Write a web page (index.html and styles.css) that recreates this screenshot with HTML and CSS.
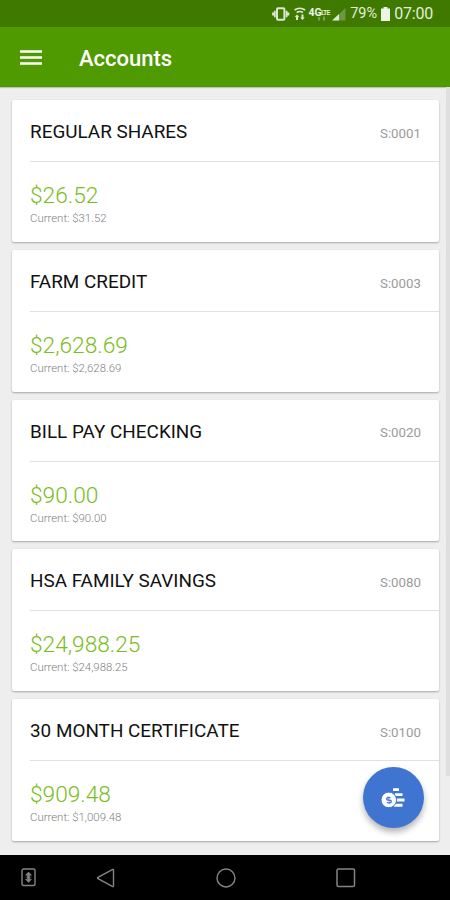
FILE: index.html
```html
<!DOCTYPE html>
<html lang="en">
<head>
    <meta charset="UTF-8">
    <meta name="viewport" content="width=device-width, initial-scale=1.0">
    <title>Accounts</title>
    <link rel="stylesheet" href="styles.css">
</head>
<body>

    <!-- Status bar -->
    <div class="status-bar">
        <svg class="status-icons" width="77" height="18" viewBox="0 0 77 18">
            <!-- Vibrate -->
            <rect x="5" y="3.2" width="7.4" height="11.6" rx="1" fill="none" stroke="#dce8cf" stroke-width="2"/>
            <path d="M2.8 5.8v6.4M14.6 5.8v6.4M1 7.5v3M16.4 7.5v3" stroke="#dce8cf" stroke-width="1.8"/>
            <!-- Wifi with arrows -->
            <path d="M22.5 5q5.3-3.5 10.6 0M24.7 7.5q3.1-2 6.200 0" fill="none" stroke="#dce8cf" stroke-width="1.7"/>
            <path d="M25 9.5l2.3 2.5h-1.3v3h-2v-3h-1.3zM30.5 15l-2.3-2.500h1.3v-3h2v3h1.300z" fill="#dce8cf"/>
            <text class="lte" x="36.5" y="11">4G</text>
            <text class="lte-small" x="49" y="10">LTE</text>
            <path d="M47 12v3.500M52 11.500v4" stroke="#8bae68" stroke-width="1.500"/>
            <!-- Signal -->
            <path d="M73.500 3v12.500h-13z" fill="#6d9843"/>
            <path d="M60 15.500l7-6.500v6.500z" fill="#dce8cf"/>
        </svg>
        <span class="battery-level">79%</span>
        <svg class="battery" width="9" height="14" viewBox="0 0 9 14">
            <path d="M2.5 0h4v1.5H9V14H0V1.500h2.500z" fill="#edf3e6"/>
        </svg>
        <span class="clock">07:00</span>
    </div>

    <header class="app-bar">
        <svg width="22" height="16" viewBox="0 0 22 16">
            <path d="M0 1.5h22M0 7.500h22M0 13.500h22" stroke="#fff" stroke-width="2.3"/>
        </svg>
        <h1>Accounts</h1>
    </header>

    <main class="accounts">
        <section class="card">
            <div class="card-header">
                <h2>REGULAR SHARES</h2>
                <span class="suffix">S:0001</span>
            </div>
            <div class="card-body">
                <div class="amount">$26.52</div>
                <div class="current">Current: $31.52</div>
            </div>
        </section>

        <section class="card">
            <div class="card-header">
                <h2>FARM CREDIT</h2>
                <span class="suffix">S:0003</span>
            </div>
            <div class="card-body">
                <div class="amount">$2,628.69</div>
                <div class="current">Current: $2,628.69</div>
            </div>
        </section>

        <section class="card">
            <div class="card-header">
                <h2>BILL PAY CHECKING</h2>
                <span class="suffix">S:0020</span>
            </div>
            <div class="card-body">
                <div class="amount">$90.00</div>
                <div class="current">Current: $90.00</div>
            </div>
        </section>

        <section class="card">
            <div class="card-header">
                <h2>HSA FAMILY SAVINGS</h2>
                <span class="suffix">S:0080</span>
            </div>
            <div class="card-body">
                <div class="amount">$24,988.25</div>
                <div class="current">Current: $24,988.25</div>
            </div>
        </section>

        <section class="card">
            <div class="card-header">
                <h2>30 MONTH CERTIFICATE</h2>
                <span class="suffix">S:0100</span>
            </div>
            <div class="card-body">
                <div class="amount">$909.48</div>
                <div class="current">Current: $1,009.48</div>
            </div>
        </section>

        <div class="scrollbar"></div>

        <button class="fab" aria-label="Move money">
            <svg width="24" height="22" viewBox="0 0 24 22">
                <path d="M12 2.600h6M14 7.600h7.500M15 13h8.500M13 18.300h8.500" stroke="#fff" stroke-width="2.900"/>
                <circle cx="7.800" cy="12.900" r="7.800" fill="#fff" stroke="#3f74d1" stroke-width="1"/>
                <text class="coin" x="7.800" y="16.700" text-anchor="middle" transform="rotate(-15 7.800 12.900)">$</text>
            </svg>
        </button>
    </main>

    <!-- Android navigation -->
    <nav class="nav-bar">
        <svg width="16" height="19" viewBox="0 0 16 19">
            <rect x="1" y="1" width="13" height="16.500" rx="1.500" fill="none" stroke="#858585" stroke-width="1.400"/>
            <path d="M7.500 4l3 3.200h-2v4h2l-3 3.200-3-3.200h2v-4h-2zM4.500 9.200h6" fill="#858585" stroke="#858585" stroke-width=".6"/>
        </svg>
        <svg width="19" height="20" viewBox="0 0 19 20">
            <path d="M16.300 1.600Q17.500 1 17.500 2.300v15.400q0 1.300-1.200.7L2 10.700q-1-.7 0-1.400z" fill="none" stroke="#858585" stroke-width="1.400"/>
        </svg>
        <svg width="20" height="20" viewBox="0 0 20 20">
            <circle cx="10" cy="10" r="9" fill="none" stroke="#858585" stroke-width="1.400"/>
        </svg>
        <svg width="20" height="20" viewBox="0 0 20 20">
            <rect x="1" y="1" width="17.500" height="17.500" rx="1.500" fill="none" stroke="#858585" stroke-width="1.500"/>
        </svg>
    </nav>

</body>
</html>
```
FILE: styles.css
```css
* {
    box-sizing: border-box;
}

body {
    margin: 0;
    height: 900px;
    display: flex;
    flex-direction: column;
    overflow: hidden;
    background-color: #eee;
    font-family: Roboto, sans-serif;
}

.status-bar {
    height: 27px;
    display: flex;
    align-items: center;
    justify-content: flex-end;
    padding-right: 17px;
    background-color: #3f7900;
    color: #e4eeda;
}

.status-icons {
    margin-right: 1px;
}

.lte {
    font-size: 10.5px;
    font-weight: bold;
    fill: #edf3e6;
}

.lte-small {
    font-size: 7px;
    font-weight: bold;
    fill: #dce8cf;
    letter-spacing: -0.9px;
}

.battery-level {
    font-size: 14.5px;
}

.battery {
    margin: 0 4px;
}

.clock {
    font-size: 16px;
    letter-spacing: -0.2px;
}

.app-bar {
    height: 60px;
    flex-shrink: 0;
    display: flex;
    align-items: center;
    gap: 37px;
    padding: 2px 20px 0;
    background-color: #4e9a00;
    box-shadow: 0 1px 1px rgba(0, 0, 0, 0.2);
}

.app-bar h1 {
    margin: 0;
    color: white;
    font-size: 22px;
    font-weight: 500;
}

.accounts {
    position: relative;
    flex: 1;
    display: flex;
    flex-direction: column;
    gap: 8px;
    padding: 13.4px 11.5px 0 12px;
}

.card {
    height: 141.7px;
    flex-shrink: 0;
    background-color: white;
    border-radius: 2px;
    box-shadow: 0 1px 2px rgba(0, 0, 0, 0.3);
}

.card-header {
    height: 62px;
    margin-left: 18px;
    padding: 2px 17.5px 0 0;
    display: flex;
    align-items: center;
    justify-content: space-between;
    border-bottom: 1px solid #e1e1e1;
}

.card-header h2 {
    margin: 0;
    color: #111;
    font-size: 18.9px;
    font-weight: 400;
}

.suffix {
    padding-top: 3px;
    color: #9b9b9b;
    font-size: 13.3px;
}

.card-body {
    padding: 20px 18px 0;
}

.amount {
    color: #79bd22;
    font-size: 22.7px;
    font-weight: 300;
    line-height: 28px;
}

.current {
    color: #808080;
    font-size: 11.4px;
    font-weight: 300;
    line-height: 16px;
}

.scrollbar {
    position: absolute;
    top: 0;
    right: 0;
    width: 4px;
    height: 689px;
    background-color: #dfdfdf;
}

.fab {
    position: absolute;
    right: 26px;
    bottom: 27px;
    width: 61px;
    height: 61px;
    display: flex;
    align-items: center;
    justify-content: center;
    padding: 0 1px 0 0;
    border: none;
    border-radius: 50%;
    background-color: #3f74d1;
    box-shadow: 0 4px 6px rgba(0, 0, 0, 0.3);
}

.coin {
    font-size: 10px;
    font-weight: bold;
    fill: #3f74d1;
}

.nav-bar {
    height: 45px;
    flex-shrink: 0;
    display: flex;
    align-items: center;
    padding-left: 21px;
    background-color: black;
}

.nav-bar svg:nth-child(2) {
    margin-left: 59px;
}

.nav-bar svg:nth-child(3) {
    margin-left: 101px;
}

.nav-bar svg:nth-child(4) {
    margin-left: 100px;
}
```
